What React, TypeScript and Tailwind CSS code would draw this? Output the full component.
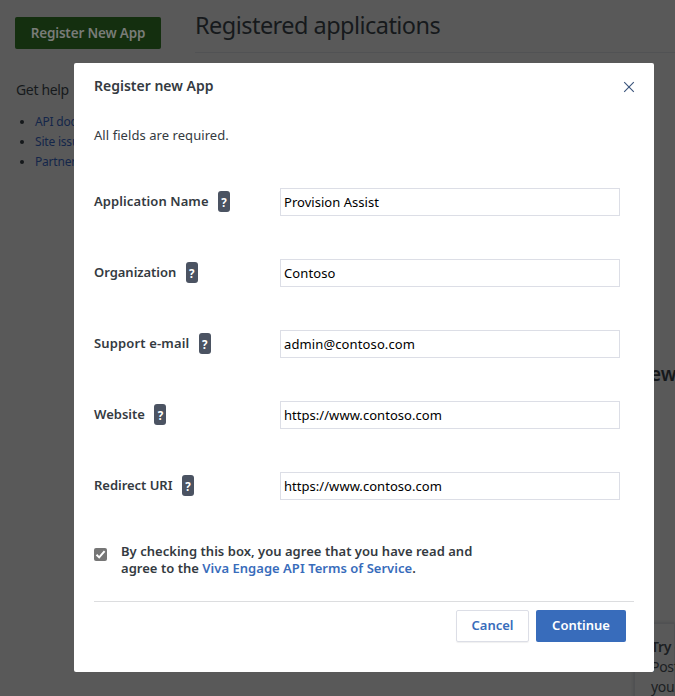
const fields = [
  { label: 'Application Name', value: 'Provision Assist', tracking: 'tracking-[0.09px]', inputTracking: 'tracking-[0.03px]' },
  { label: 'Organization', value: 'Contoso', tracking: 'tracking-[-0.03px]', inputTracking: 'tracking-[0.1px]' },
  { label: 'Support e-mail', value: 'admin@contoso.com', tracking: 'tracking-[0.15px]', inputTracking: 'tracking-[0.12px]' },
  { label: 'Website', value: 'https://www.contoso.com', tracking: 'tracking-[0.02px]', inputTracking: 'tracking-[0.04px]' },
  { label: 'Redirect URI', value: 'https://www.contoso.com', tracking: 'tracking-[-0.03px]', inputTracking: 'tracking-[0.04px]' },
];

const helpLinks = ['API docs', 'Site issues', 'Partner'];

function Backdrop() {
  return (
    <div className="flex h-[696px] w-[675px] bg-[#595959]">
      <aside className="w-[195px] shrink-0 pt-[17px] pl-[15px]">
        <button className="flex h-8 w-[146px] items-center justify-center rounded-[2px] bg-[#142f0f] text-[13.5px] font-semibold tracking-[-0.17px] whitespace-nowrap text-[#797c78]">
          Register New App
        </button>
        <h2 className="mt-[31px] pl-[1px] text-[14px] leading-5 tracking-[-0.35px] text-[#16191c]">Get help</h2>
        <ul className="mt-[12px] pl-[5px] text-[12px] leading-5 tracking-[-0.2px] text-[#14264a]">
          {helpLinks.map((link) => (
            <li key={link} className="flex items-center whitespace-nowrap">
              <span className="mr-[11px] size-1 rounded-full bg-[#15181b]" />
              {link}
            </li>
          ))}
        </ul>
      </aside>
      <main className="flex w-[480px] flex-col overflow-hidden">
        <h1 className="h-[53px] shrink-0 border-b border-[#515254] pt-[9px] text-[23.5px] leading-8 tracking-[-0.54px] whitespace-nowrap text-[#16191c]">
          Registered applications
        </h1>
        <p className="mt-[309px] ml-[418px] pl-[37px] text-[19px] leading-6 font-semibold text-[#15181b]">ew</p>
        <div className="mt-[237px] ml-[439px] h-[90px] shrink-0 rounded-tl-[2px] border border-[#505153] pt-[13px] pl-[16px] text-[14px] leading-5 tracking-[-0.3px] whitespace-nowrap text-[#1b1e22] shadow-[0_0_3px_#47484a]">
          <p className="font-semibold">Try our</p>
          <p>Post to</p>
          <p>your</p>
        </div>
      </main>
    </div>
  );
}

export default function App() {
  return (
    <div className="relative h-[696px] w-[675px] overflow-hidden font-['Noto_Sans',sans-serif] text-[#343a41]">
      <Backdrop />
      <section className="absolute top-[63px] left-[74px] flex h-[609px] w-[580px] flex-col rounded-[2px] bg-white px-5">
        <header className="flex h-[48px] shrink-0 items-center justify-between">
          <h2 className="pb-[3px] text-[14px] font-semibold">Register new App</h2>
          <button aria-label="Close" className="mr-[-1px] grid size-3">
            <svg viewBox="0 0 12 12" className="size-3" fill="none" stroke="#3d567d" strokeWidth="1.15">
              <path d="M1.2 1.2 10.8 10.8M10.8 1.2 1.2 10.8" />
            </svg>
          </button>
        </header>
        <p className="mt-[14px] text-[13px] leading-5 tracking-[0.06px]">All fields are required.</p>
        <div className="mt-[43px] flex flex-col gap-[43px]">
          {fields.map((field) => (
            <div key={field.label} className="flex h-[28px] items-start">
              <label className="flex w-[186px] items-start text-[13px] leading-[26px] font-semibold whitespace-nowrap">
                <span className={field.tracking}>{field.label}</span>
                <span className="mt-[3px] ml-[9.5px] flex h-[21px] w-[12px] items-center justify-center rounded-[3px] bg-[#4b5362] pt-[2px] text-[11.5px] leading-none font-bold text-white">
                  ?
                </span>
              </label>
              <input
                readOnly
                value={field.value}
                className={`h-[28px] w-[340px] border border-[#dcdee6] px-[3px] text-[13px] text-black outline-none ${field.inputTracking}`}
              />
            </div>
          ))}
        </div>
        <div className="mt-[43px] flex h-[59px] items-start border-b border-[#dcdddf]">
          <span className="mt-[5px] mr-[14px] grid size-[13px] place-items-center rounded-[2px] bg-[#767676]">
            <svg viewBox="0 0 13 13" className="size-[13px]" fill="none" stroke="#fff" strokeWidth="2">
              <path d="M2.5 6.8 5.2 9.4 10.6 3.2" />
            </svg>
          </span>
          <p className="text-[13px] leading-[17px] font-semibold tracking-[0.03px] whitespace-nowrap">
            By checking this box, you agree that you have read and
            <br />
            agree to the <a className="text-[#386cbb]">Viva Engage API Terms of Service</a>.
          </p>
        </div>
        <footer className="mt-2 flex justify-end gap-[7px] pr-[8px] text-[13px] font-semibold">
          <button className="h-[32px] w-[73px] rounded-[2px] border border-[#dcdee6] text-[#386cbb] shadow-[0_1px_1px_#00000010]">Cancel</button>
          <button className="h-[32px] w-[90px] rounded-[2px] bg-[#386cbb] text-white">Continue</button>
        </footer>
      </section>
    </div>
  );
}
